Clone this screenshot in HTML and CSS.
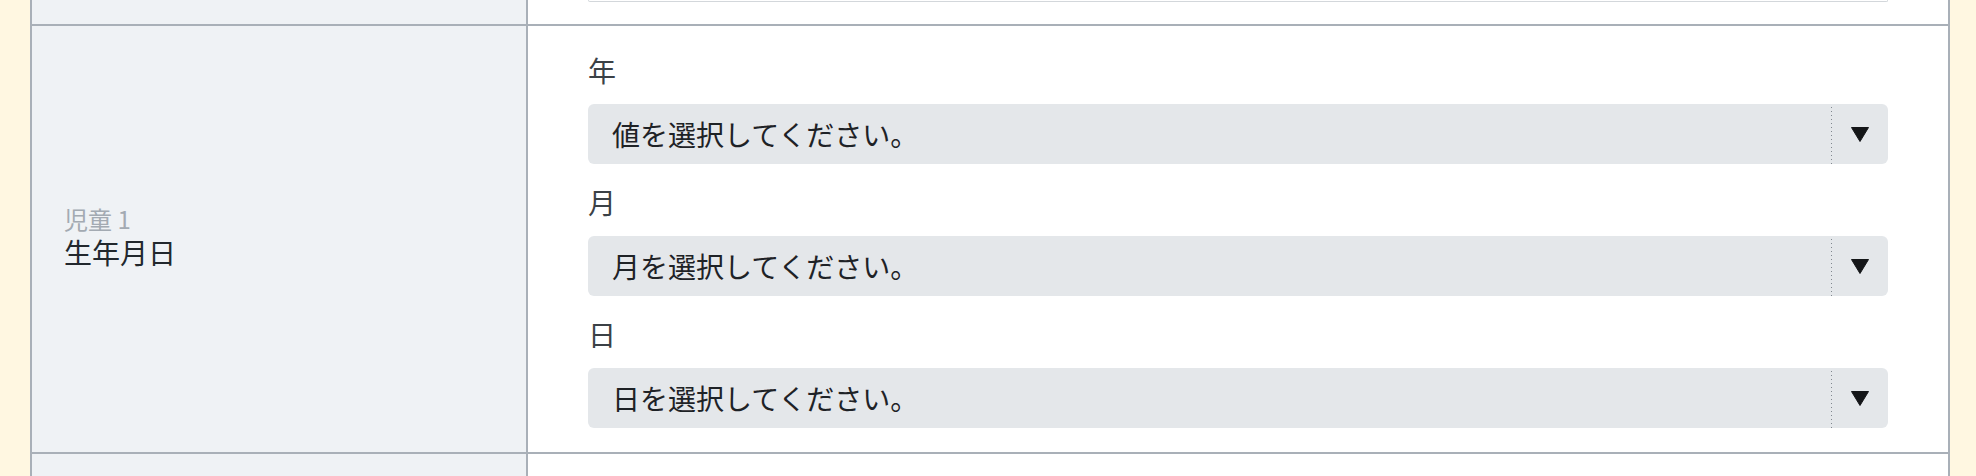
FILE: index.html
```html
<!DOCTYPE html>
<html lang="ja">
<head>
    <meta charset="UTF-8">
    <meta name="viewport" content="width=device-width, initial-scale=1.0">
    <title>児童情報</title>
    <link rel="stylesheet" href="styles.css">
</head>
<body>

<div class="form">
    <div class="row row-prev">
        <div class="row-head"></div>
        <div class="row-body">
            <div class="input-edge"></div>
        </div>
    </div>

    <div class="row">
        <div class="row-head">
            <span class="sub-label">児童 1</span>
            <span class="main-label">生年月日</span>
        </div>
        <div class="row-body">
            <div class="field">
                <label class="field-label" for="birth-year">年</label>
                <div class="select">
                    <select id="birth-year">
                        <option>値を選択してください。</option>
                    </select>
                    <span class="select-arrow">
                        <svg width="18" height="15" viewBox="0 0 18 15"><polygon points="0.5,0.5 17.5,0.5 9,14.5" fill="#141618" stroke="#141618" stroke-linejoin="round"/></svg>
                    </span>
                </div>
            </div>
            <div class="field">
                <label class="field-label" for="birth-month">月</label>
                <div class="select">
                    <select id="birth-month">
                        <option>月を選択してください。</option>
                    </select>
                    <span class="select-arrow">
                        <svg width="18" height="15" viewBox="0 0 18 15"><polygon points="0.5,0.5 17.5,0.5 9,14.5" fill="#141618" stroke="#141618" stroke-linejoin="round"/></svg>
                    </span>
                </div>
            </div>
            <div class="field">
                <label class="field-label" for="birth-day">日</label>
                <div class="select">
                    <select id="birth-day">
                        <option>日を選択してください。</option>
                    </select>
                    <span class="select-arrow">
                        <svg width="18" height="15" viewBox="0 0 18 15"><polygon points="0.5,0.5 17.5,0.5 9,14.5" fill="#141618" stroke="#141618" stroke-linejoin="round"/></svg>
                    </span>
                </div>
            </div>
        </div>
    </div>

    <div class="row row-next">
        <div class="row-head"></div>
        <div class="row-body"></div>
    </div>
</div>

</body>
</html>
```

FILE: styles.css
```css
body {
    font-family: "Noto Sans CJK JP", "Noto Sans", sans-serif;
    margin: 0;
    padding: 0 26px 0 30px;
    min-height: 100vh;
    display: flex;
    flex-direction: column;
    background-color: #fff7e1;
    color: #2b3136;
}

.form {
    flex: 1;
    display: flex;
    flex-direction: column;
    border-left: 2px solid #a9b0b8;
    border-right: 2px solid #a9b0b8;
    background: #fff;
}

.row {
    display: grid;
    grid-template-columns: 496px 1fr;
    border-bottom: 2px solid #a9b0b8;
}

.row-head {
    background-color: #eff2f5;
    border-right: 2px solid #a9b0b8;
    padding: 0 32px 4px;
    display: flex;
    flex-direction: column;
    justify-content: center;
}

.row-body {
    padding: 23px 60px 24px;
}

.row-prev .row-body {
    padding: 0 60px 22px;
}

.input-edge {
    height: 1px;
    border: 1px solid #d3d7db;
    border-top: none;
    border-radius: 0 0 6px 6px;
}

.row-next {
    flex: 1;
    border-bottom: none;
}

.row-next .row-body {
    padding: 0;
}

.sub-label {
    font-size: 24px;
    line-height: 1.3;
    color: #a3aab2;
}

.main-label {
    font-size: 28px;
    line-height: 1.3;
    color: #22282d;
}

.field {
    margin-bottom: 17px;
}

.field:last-child {
    margin-bottom: 0;
}

.field-label {
    display: block;
    font-size: 28px;
    line-height: 42px;
    margin-bottom: 13px;
    color: #3b4146;
}

.select {
    display: flex;
    height: 60px;
    background-color: #e4e7ea;
    border-radius: 6px;
}

.select select {
    flex: 1;
    appearance: none;
    border: none;
    background: transparent;
    font-family: inherit;
    font-size: 28px;
    color: #1e2226;
    padding: 0 24px;
    outline: none;
}

.select-arrow {
    width: 57px;
    display: flex;
    align-items: center;
    justify-content: center;
    background-image: repeating-linear-gradient(to bottom, #80878e 0 1px, transparent 1px 4px);
    background-size: 1px 100%;
    background-repeat: no-repeat;
    background-position: left 3px;
}
```
